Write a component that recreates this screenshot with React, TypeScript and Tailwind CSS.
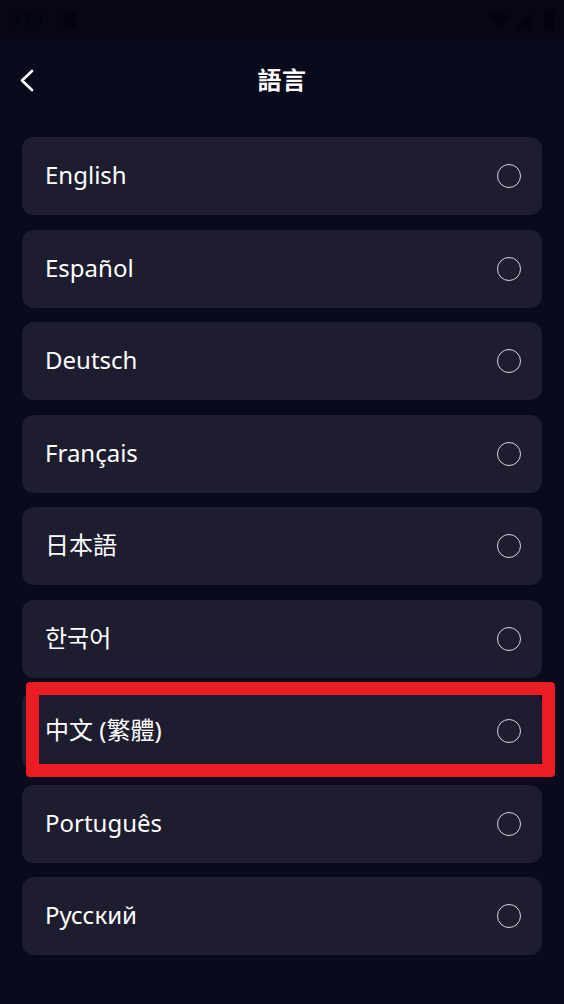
const languages = [
  'English',
  'Español',
  'Deutsch',
  'Français',
  '日本語',
  '한국어',
  '中文 (繁體)',
  'Português',
  'Русский',
];

const font = {
  fontFamily: '"Noto Sans", "Noto Sans CJK TC", "Noto Sans CJK KR", "Noto Sans CJK JP", sans-serif',
};

function StatusBar() {
  return (
    <div className="h-10 flex items-center justify-between px-[10px] bg-[#060616] text-[#020210]">
      <div className="flex items-center gap-5">
        <span className="text-[17px] font-['Roboto',sans-serif]">9:13</span>
        <div className="w-[13px] h-[16px] bg-[#020210] rounded-[2px]" />
      </div>
      <div className="flex items-center gap-1">
        <svg width="22" height="18" viewBox="0 0 22 18">
          <path d="M11 16 L1 5 Q11 -3 21 5 Z" fill="#020210" />
        </svg>
        <svg width="18" height="18" viewBox="0 0 18 18">
          <path d="M17 1 V17 H1 Z" fill="#020210" />
        </svg>
        <div className="w-[10px] h-[19px] bg-[#020210] rounded-[2px] ml-2" />
      </div>
    </div>
  );
}

export default function App() {
  return (
    <div className="w-[564px] h-[1004px] bg-[#0a0a1d] relative overflow-hidden" style={font}>
      <StatusBar />

      {/* Header */}
      <div className="relative h-[80px] flex items-center justify-center">
        <svg
          className="absolute left-[19px] top-[29px]"
          width="15"
          height="23"
          viewBox="0 0 15 23"
          fill="none"
          stroke="white"
          strokeWidth="2.6"
          strokeLinecap="round"
          strokeLinejoin="round"
        >
          <polyline points="13,2 3,11.5 13,21" />
        </svg>
        <h1 className="text-white text-[24px] font-bold tracking-wide">語言</h1>
      </div>

      {/* Language list */}
      <div className="flex flex-col gap-[14.5px] px-[22px] pt-[17px]">
        {languages.map((lang) => (
          <div
            key={lang}
            className="h-[78px] w-[520px] rounded-xl bg-[#1e1d2f] flex items-center justify-between pl-[23px] pr-[21px]"
          >
            <span className="text-white text-[24px] font-normal leading-none -mt-[2px]">{lang}</span>
            <div className="w-[24px] h-[24px] rounded-full border-[1.6px] border-[#d6d6de]" />
          </div>
        ))}
      </div>

      {/* Highlight annotation */}
      <div className="absolute left-[26px] top-[682px] w-[529px] h-[95px] border-[13px] border-[#ec1c24] rounded-[4px]" />
    </div>
  );
}
